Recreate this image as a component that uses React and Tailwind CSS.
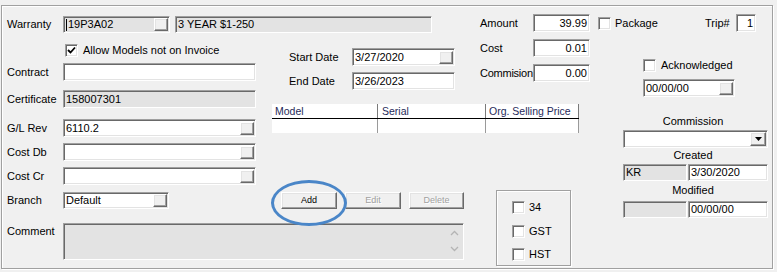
import React from 'react';

const sunken =
  'border border-t-[#a0a0a0] border-l-[#a0a0a0] border-b-white border-r-white shadow-[inset_1px_1px_0_#696969,inset_-1px_-1px_0_#e3e3e3]';
const raised =
  'border border-t-white border-l-white border-b-[#696969] border-r-[#696969] shadow-[inset_-1px_-1px_0_#a0a0a0,inset_1px_1px_0_#e3e3e3] bg-[#f0f0f0]';

const Field = ({ className = '', gray = false, btn = false, right = false, children }) => (
  <div className={`flex items-center ${sunken} ${gray ? 'bg-[#e3e3e3]' : 'bg-white'} ${className}`}>
    <span className={`flex flex-1 items-center overflow-hidden whitespace-nowrap px-[2px] leading-[13px] ${right ? 'justify-end' : ''}`}>
      {children}
    </span>
    {btn && <span className={`mr-[1px] h-[13px] w-[14px] shrink-0 ${raised}`} />}
  </div>
);

const Check = ({ checked = false }) => (
  <span className={`inline-flex h-[13px] w-[13px] shrink-0 items-center justify-center bg-white ${sunken}`}>
    {checked && (
      <svg width="9" height="9" viewBox="0 0 9 9">
        <path d="M1 4 L3.5 6.5 L8 1.5" fill="none" stroke="black" strokeWidth="1.8" />
      </svg>
    )}
  </span>
);

const Btn = ({ children, disabled = false, className = '' }) => (
  <div
    className={`flex h-[17px] items-center justify-center text-[9px] ${raised} ${
      disabled ? 'text-[#a0a0a0] [text-shadow:1px_1px_0_white]' : 'text-black'
    } ${className}`}
  >
    {children}
  </div>
);

const Row = ({ label, children, className = '' }) => (
  <div className={`flex h-[18px] items-center ${className}`}>
    <div className="w-[56px] shrink-0 whitespace-nowrap">{label}</div>
    {children}
  </div>
);

export default function App() {
  return (
    <div className="relative h-[272px] w-[777px] overflow-hidden bg-[#f0f0f0] font-['Liberation_Sans',Arial,sans-serif] text-[11px] text-black">
      {/* Frame */}
      <div className="ml-[1px] mt-[5px] flex h-[264px] w-[772px] border border-[#a0a0a0] pl-[5px] pt-[8px] shadow-[inset_1px_1px_0_white,1px_1px_0_white]">
        {/* Main column */}
        <div className="flex w-[583px] shrink-0 flex-col">
          {/* Warranty / Amount */}
          <div className="flex h-[19px] items-start">
            <div className="mt-[1px] w-[56px] leading-[19px]">Warranty</div>
            <Field className="mt-[2px] h-[17px] w-[107px]" gray btn>
              <span className="mr-[1px] inline-block h-[12px] w-[1px] bg-black" />
              19P3A02
            </Field>
            <Field className="ml-[5px] mt-[2px] h-[17px] w-[257px]" gray>
              3 YEAR $1-250
            </Field>
            <div className="ml-[48px] w-[53px] leading-[18px]">Amount</div>
            <Field className="h-[18px] w-[57px]" right>
              39.99
            </Field>
          </div>

          <div className="flex items-start">
            {/* Left fields */}
            <div className="flex w-[249px] shrink-0 flex-col">
              <div className="mt-[11px] flex h-[13px] items-center pl-[58px]">
                <Check checked />
                <span className="ml-[5px] whitespace-nowrap">Allow Models not on Invoice</span>
              </div>
              <Row label="Contract" className="mt-[6px]">
                <Field className="h-[18px] w-[193px]" />
              </Row>
              <Row label="Certificate" className="mt-[9px]">
                <Field className="h-[18px] w-[193px]" gray>
                  158007301
                </Field>
              </Row>
              <Row label="G/L Rev" className="mt-[11px]">
                <Field className="h-[18px] w-[193px]" btn>
                  6110.2
                </Field>
              </Row>
              <Row label="Cost Db" className="mt-[6px]">
                <Field className="h-[18px] w-[193px]" btn />
              </Row>
              <Row label="Cost Cr" className="mt-[6px]">
                <Field className="h-[18px] w-[193px]" btn />
              </Row>
            </div>

            {/* Middle */}
            <div className="ml-[16px] flex w-[318px] flex-col">
              <div className="flex items-start">
                <div className="ml-[17px] mt-[15px] flex w-[166px] flex-col">
                  <div className="flex h-[18px] items-center">
                    <div className="w-[63px]">Start Date</div>
                    <Field className="h-[18px] w-[103px]" btn>
                      3/27/2020
                    </Field>
                  </div>
                  <div className="mt-[6px] flex h-[18px] items-center">
                    <div className="w-[63px]">End Date</div>
                    <Field className="h-[18px] w-[103px]">3/26/2023</Field>
                  </div>
                </div>
                <div className="ml-[25px] mt-[6px] flex w-[110px] flex-col">
                  <div className="flex h-[18px] items-center">
                    <div className="w-[53px]">Cost</div>
                    <Field className="h-[18px] w-[57px]" right>
                      0.01
                    </Field>
                  </div>
                  <div className="mt-[7px] flex h-[18px] items-center">
                    <div className="w-[53px] whitespace-nowrap tracking-[-0.25px]">Commision</div>
                    <Field className="h-[18px] w-[57px]" right>
                      0.00
                    </Field>
                  </div>
                </div>
              </div>

              {/* Grid */}
              <div className="mt-[14px] w-[307px] bg-white text-[10.5px] text-[#1f2a5a]">
                <div className="flex h-[15px] border-b border-black">
                  <div className="w-[106px] border-r border-[#7a7a7a] pl-[3px] leading-[14px]">Model</div>
                  <div className="w-[108px] border-r border-[#7a7a7a] pl-[4px] leading-[14px]">Serial</div>
                  <div className="w-[93px] border-r border-[#7a7a7a] pl-[3px] leading-[14px] whitespace-nowrap">Org. Selling Price</div>
                </div>
                <div className="flex h-[14px]">
                  <div className="w-[106px] border-r border-[#9a9a9a]" />
                  <div className="w-[108px] border-r border-[#9a9a9a]" />
                  <div className="w-[93px] border-r border-[#9a9a9a]" />
                </div>
              </div>
            </div>
          </div>

          {/* Bottom */}
          <div className="flex items-start">
            <div className="flex w-[457px] shrink-0 flex-col">
              <div className="mt-[7px] flex h-[17px] items-center">
                <div className="w-[56px]">Branch</div>
                <Field className="h-[17px] w-[106px]" btn>
                  Default
                </Field>
                <Btn className="ml-[112px] w-[56px]">Add</Btn>
                <Btn className="ml-[8px] w-[56px]" disabled>
                  Edit
                </Btn>
                <Btn className="ml-[8px] w-[55px]" disabled>
                  Delete
                </Btn>
              </div>
              <div className="mt-[14px] flex items-start">
                <div className="mt-[2px] w-[56px] leading-[13px]">Comment</div>
                <div className={`flex h-[37px] w-[401px] justify-end bg-[#e3e3e3] ${sunken}`}>
                  <div className="mr-[4px] flex flex-col items-center pt-[6px]">
                    <svg width="9" height="6" viewBox="0 0 9 6">
                      <path d="M1 5 L4.5 1.5 L8 5" fill="none" stroke="#b4b4b4" strokeWidth="1.3" />
                    </svg>
                    <svg className="mt-[10px]" width="9" height="6" viewBox="0 0 9 6">
                      <path d="M1 1 L4.5 4.5 L8 1" fill="none" stroke="#b4b4b4" strokeWidth="1.3" />
                    </svg>
                  </div>
                </div>
              </div>
            </div>

            {/* Tax group box */}
            <div className="ml-[32px] mt-[5px] flex h-[76px] w-[75px] flex-col border border-[#a0a0a0] pl-[15px] pt-[10px] shadow-[inset_1px_1px_0_white,1px_1px_0_white]">
              <div className="flex h-[13px] items-center">
                <Check />
                <span className="ml-[4px]">34</span>
              </div>
              <div className="mt-[11px] flex h-[13px] items-center">
                <Check />
                <span className="ml-[4px]">GST</span>
              </div>
              <div className="mt-[10px] flex h-[13px] items-center">
                <Check />
                <span className="ml-[4px]">HST</span>
              </div>
            </div>
          </div>
        </div>

        {/* Right column */}
        <div className="ml-[7px] flex w-[171px] shrink-0 flex-col">
          <div className="flex h-[18px] items-center">
            <div className="flex w-[108px] items-center pl-[1px]">
              <Check />
              <span className="ml-[4px]">Package</span>
            </div>
            <div className="w-[31px]">Trip#</div>
            <Field className="h-[18px] w-[20px]" right>
              1
            </Field>
          </div>
          <div className="mt-[27px] flex h-[13px] items-center pl-[46px]">
            <Check />
            <span className="ml-[5px]">Acknowledged</span>
          </div>
          <Field className="ml-[46px] mt-[7px] h-[18px] w-[92px]" btn>
            00/00/00
          </Field>

          <div className="ml-[26px] flex w-[145px] flex-col">
            <div className="mt-[18px] pr-[5px] text-center leading-[13px]">Commission</div>
            <div className={`mt-[2px] flex h-[18px] items-center justify-end bg-white ${sunken}`}>
              <span className={`mr-[1px] flex h-[14px] w-[16px] items-center justify-center ${raised}`}>
                <svg width="7" height="4" viewBox="0 0 7 4">
                  <path d="M0 0 H7 L3.5 4 Z" fill="black" />
                </svg>
              </span>
            </div>
            <div className="mt-[1px] pr-[5px] text-center leading-[13px]">Created</div>
            <div className="mt-[2px] flex h-[17px]">
              <Field className="h-[17px] w-[64px]" gray>
                KR
              </Field>
              <Field className="ml-[1px] h-[17px] w-[80px]">3/30/2020</Field>
            </div>
            <div className="mt-[3px] pr-[5px] text-center leading-[13px]">Modified</div>
            <div className="mt-[4px] flex h-[17px]">
              <Field className="h-[17px] w-[64px]" gray />
              <Field className="ml-[1px] h-[17px] w-[80px]">00/00/00</Field>
            </div>
          </div>
        </div>
      </div>

      {/* Annotation around Add */}
      <div className="pointer-events-none absolute left-[271px] top-[180px] h-[46px] w-[76px] rounded-[50%] border-[3px] border-[#4a86c8]" />
    </div>
  );
}
